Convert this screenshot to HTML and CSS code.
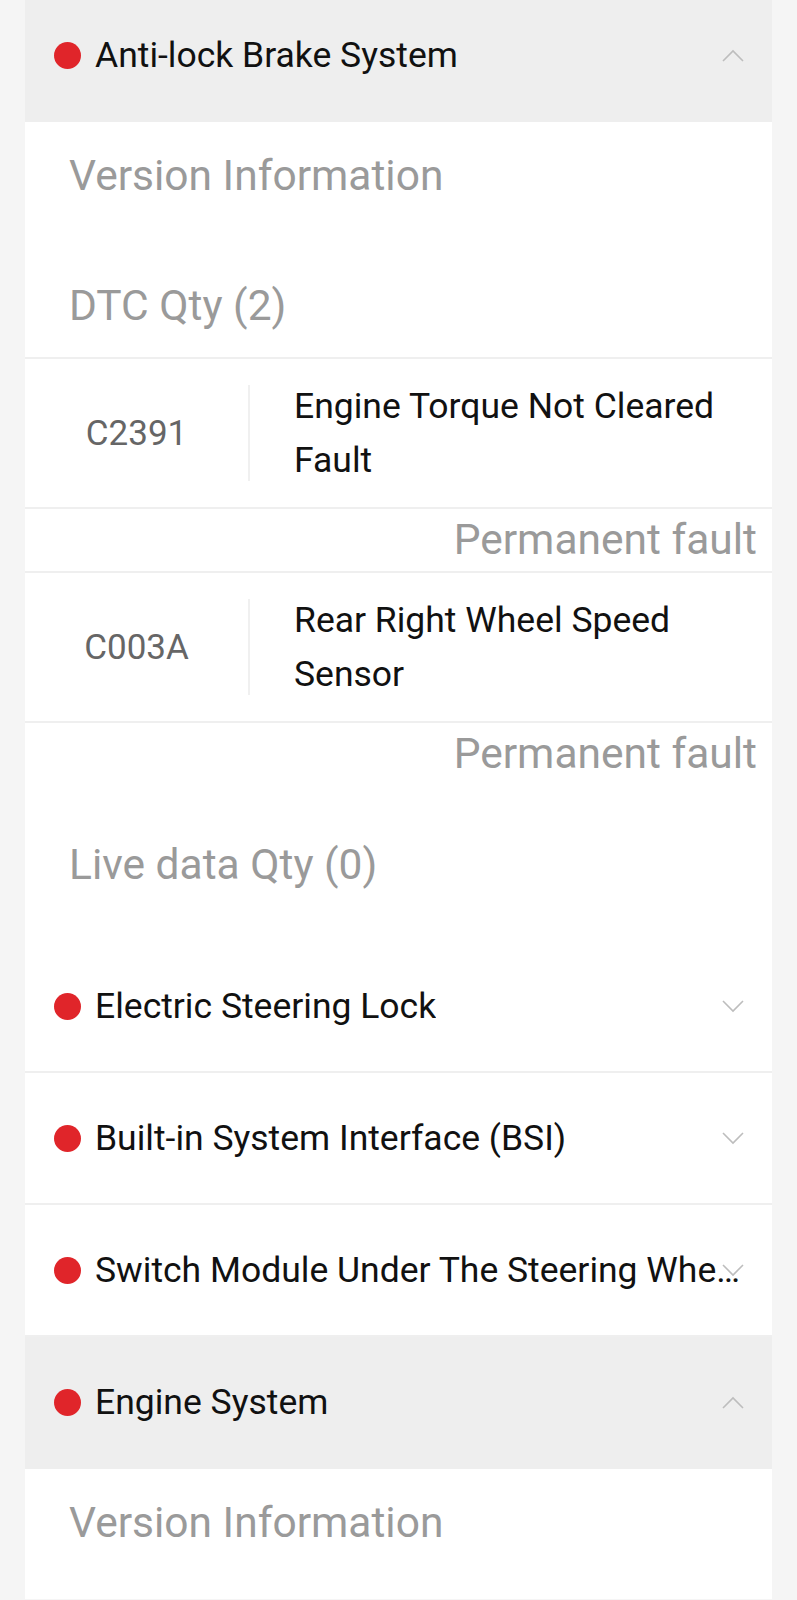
FILE: index.html
```html
<!DOCTYPE html>
<html lang="en">
  <head>
    <meta charset="UTF-8" />
    <meta name="viewport" content="width=device-width, initial-scale=1.0" />
    <title>Diagnosis Report</title>
    <link rel="stylesheet" href="styles.css">
  </head>
  <body>
    <div class="system-list">
      <section class="system">
        <div class="system-head open">
          <span class="status-dot"></span>
          <span class="system-name">Anti-lock Brake System</span>
          <svg class="chevron" width="22" height="13" viewBox="0 0 22 13">
            <polyline points="1,12 11,2 21,12" />
          </svg>
        </div>
        <div class="system-body">
          <div class="section-label first">Version Information</div>
          <div class="section-label">DTC Qty (2)</div>
          <div class="dtc-list">
            <div class="dtc">
              <div class="dtc-main">
                <span class="dtc-code">C2391</span>
                <span class="dtc-divider"></span>
                <span class="dtc-desc">Engine Torque Not Cleared Fault</span>
              </div>
              <div class="dtc-state">Permanent fault</div>
            </div>
            <div class="dtc">
              <div class="dtc-main">
                <span class="dtc-code">C003A</span>
                <span class="dtc-divider"></span>
                <span class="dtc-desc">Rear Right Wheel Speed Sensor</span>
              </div>
              <div class="dtc-state">Permanent fault</div>
            </div>
          </div>
          <div class="section-label live">Live data Qty (0)</div>
        </div>
      </section>

      <section class="system">
        <div class="system-head">
          <span class="status-dot"></span>
          <span class="system-name">Electric Steering Lock</span>
          <svg class="chevron" width="22" height="13" viewBox="0 0 22 13">
            <polyline points="1,1 11,11 21,1" />
          </svg>
        </div>
      </section>

      <section class="system">
        <div class="system-head">
          <span class="status-dot"></span>
          <span class="system-name">Built-in System Interface (BSI)</span>
          <svg class="chevron" width="22" height="13" viewBox="0 0 22 13">
            <polyline points="1,1 11,11 21,1" />
          </svg>
        </div>
      </section>

      <section class="system">
        <div class="system-head">
          <span class="status-dot"></span>
          <span class="system-name">Switch Module Under The Steering Wheel</span>
          <svg class="chevron" width="22" height="13" viewBox="0 0 22 13">
            <polyline points="1,1 11,11 21,1" />
          </svg>
        </div>
      </section>

      <section class="system">
        <div class="system-head open">
          <span class="status-dot"></span>
          <span class="system-name">Engine System</span>
          <svg class="chevron" width="22" height="13" viewBox="0 0 22 13">
            <polyline points="1,12 11,2 21,12" />
          </svg>
        </div>
        <div class="system-body">
          <div class="section-label first">Version Information</div>
        </div>
      </section>
    </div>
  </body>
</html>
```

FILE: styles.css
```css
body {
  margin: 0;
  background-color: #f5f5f5;
  font-family: Roboto, "Noto Sans", sans-serif;
  color: #111;
}

.system-list {
  margin: -10px 25px 0;
  background-color: white;
}

.system-head {
  position: relative;
  display: flex;
  align-items: center;
  height: 130px;
  padding: 0 31px 0 29px;
  border-bottom: 2px solid #efefef;
  background-color: white;
}

.system-head.open {
  background-color: #eeeeee;
  border-bottom-color: #eeeeee;
}

.status-dot {
  flex: none;
  width: 27px;
  height: 27px;
  border-radius: 50%;
  background-color: #e0252a;
  margin-right: 14px;
}

.system-name {
  font-size: 35.5px;
  white-space: nowrap;
  overflow: hidden;
  text-overflow: ellipsis;
}

.chevron {
  position: absolute;
  right: 28px;
  top: 59px;
  fill: none;
  stroke: #bdbdbd;
  stroke-width: 1.6;
}

.system-body {
  padding-top: 30px;
  padding-bottom: 52px;
}

.section-label {
  font-size: 42.5px;
  line-height: 48px;
  color: #9a9a9a;
  padding: 0 44px;
  margin-top: 82px;
}

.section-label.first {
  margin-top: 0;
}

.section-label.live {
  margin-top: 56px;
}

.dtc-list {
  margin-top: 27px;
}

.dtc-main {
  display: flex;
  align-items: center;
  padding: 20px 15px 20px 0;
  border-top: 2px solid #efefef;
}

.dtc-code {
  flex: none;
  width: 223px;
  text-align: center;
  font-size: 35px;
  color: #666;
}

.dtc-divider {
  flex: none;
  width: 2px;
  height: 96px;
  background-color: #f0f0f0;
}

.dtc-desc {
  padding-left: 44px;
  font-size: 35.5px;
  line-height: 54px;
}

.dtc-state {
  border-top: 2px solid #efefef;
  text-align: right;
  font-size: 42.5px;
  line-height: 62px;
  color: #9a9a9a;
  padding-right: 15px;
}
```
